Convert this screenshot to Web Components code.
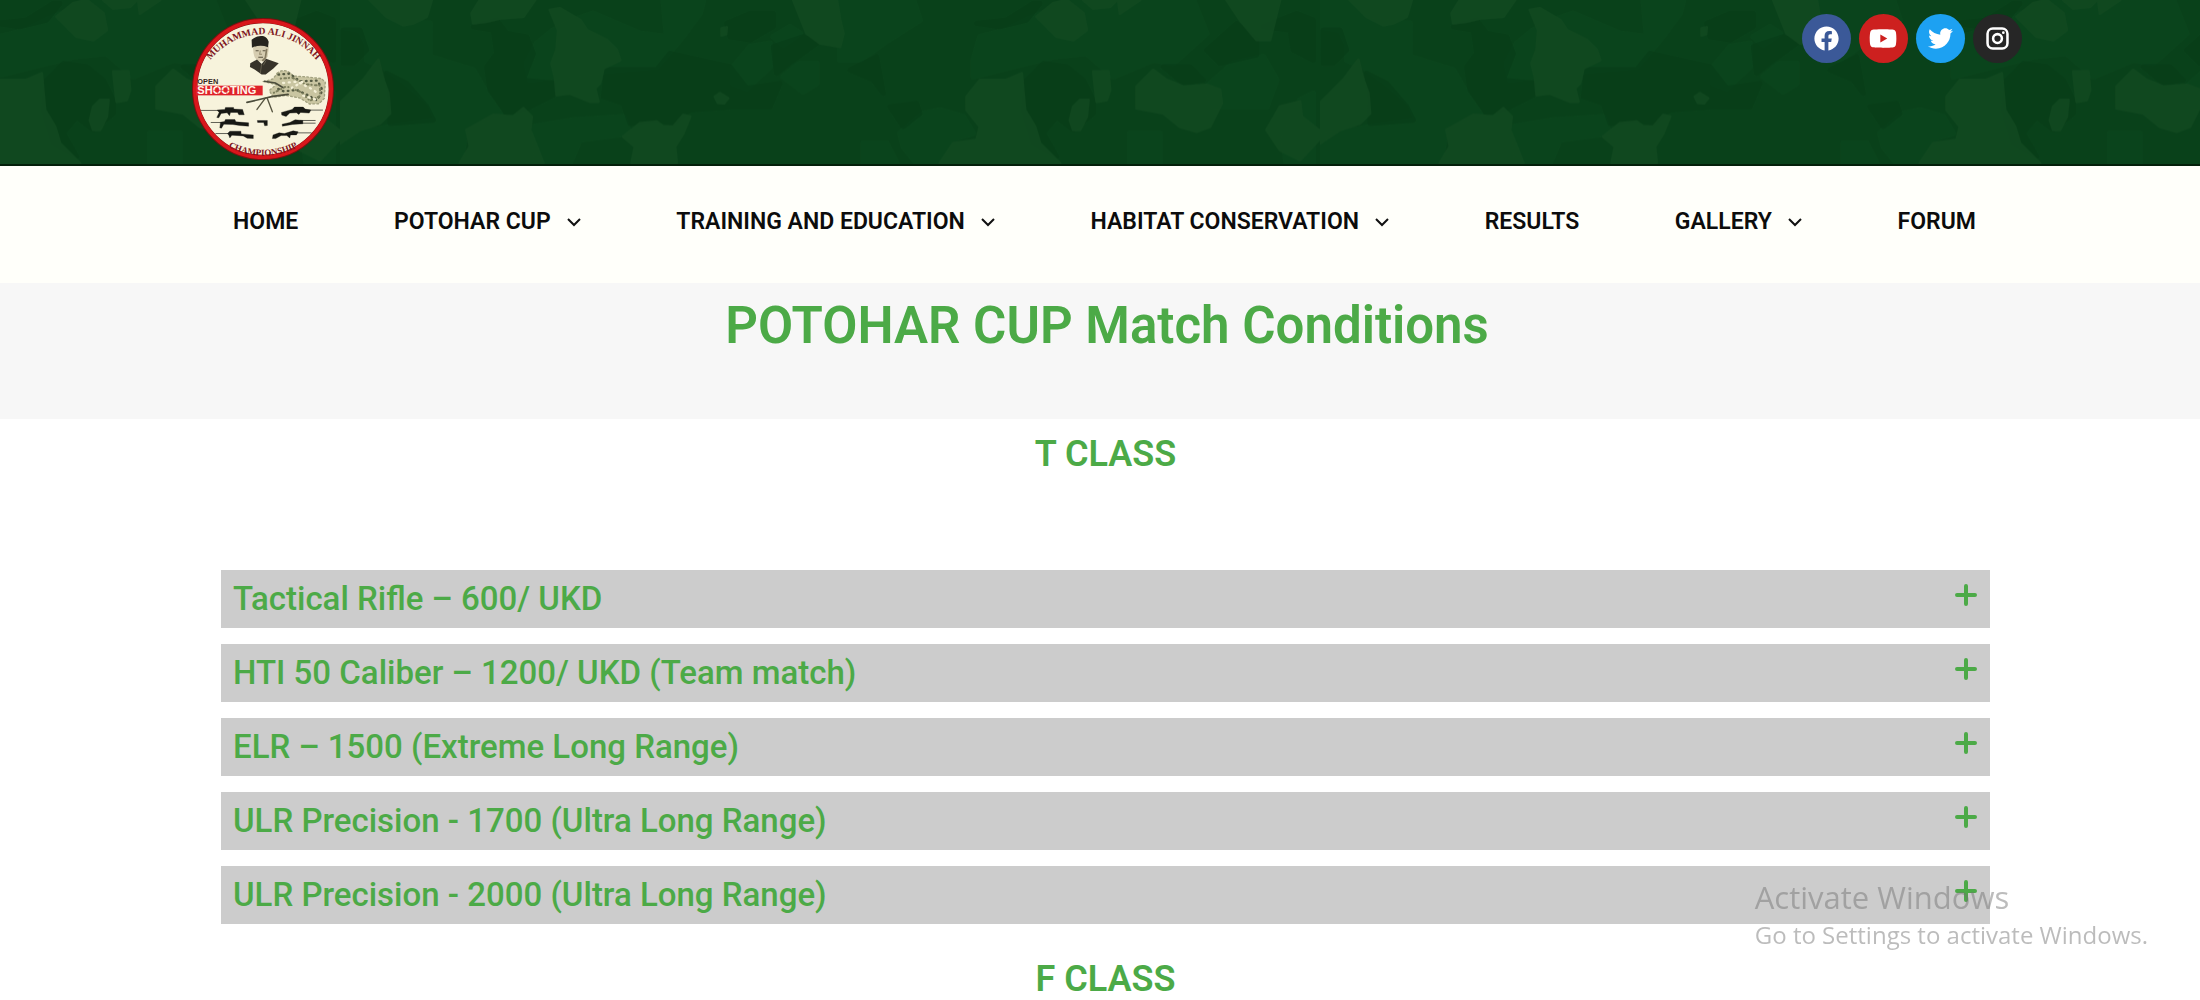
<!DOCTYPE html>
<html lang="en">
<head>
    <meta charset="UTF-8">
    <meta name="viewport" content="width=device-width, initial-scale=1.0">
    <title>POTOHAR CUP Match Conditions</title>
    <style>
        body {
            margin: 0;
            background-color: #fff;
            font-family: Roboto, "Liberation Sans", sans-serif;
            --green: #4caa47;
            --edge-left: 192px;
            --edge-right: 178px;
        }
    </style>
</head>
<body>

    <site-header></site-header>

    <site-nav>
        <nav-item href="#home">HOME</nav-item>
        <nav-item href="#cup" menu>POTOHAR CUP</nav-item>
        <nav-item href="#training" menu>TRAINING AND EDUCATION</nav-item>
        <nav-item href="#habitat" menu>HABITAT CONSERVATION</nav-item>
        <nav-item href="#results">RESULTS</nav-item>
        <nav-item href="#gallery" menu>GALLERY</nav-item>
        <nav-item href="#forum">FORUM</nav-item>
    </site-nav>

    <page-title>POTOHAR CUP Match Conditions</page-title>

    <match-class name="T CLASS">
        <match-item>Tactical Rifle – 600/ UKD</match-item>
        <match-item>HTI 50 Caliber – 1200/ UKD (Team match)</match-item>
        <match-item>ELR – 1500 (Extreme Long Range)</match-item>
        <match-item>ULR Precision - 1700 (Ultra Long Range)</match-item>
        <match-item>ULR Precision - 2000 (Ultra Long Range)</match-item>
    </match-class>

    <match-class name="F CLASS"></match-class>

    <activate-notice></activate-notice>

    <script>
        // Camouflage strip, one 980px tile repeated across the header
        class CamoBackground extends HTMLElement {
            constructor() {
                super();
                this.attachShadow({ mode: 'open' });
                this.shadowRoot.innerHTML = `
                    <style>
                        :host { display: block; overflow: hidden; }
                        svg { display: block; width: 100%; height: 100%; }
                        g { stroke-width: 16; stroke-linejoin: round; }
                        .mid { fill: #0a451c; stroke: #0a451c; opacity: 0.8; }
                        .dark { fill: #063c16; stroke: #063c16; opacity: 0.6; }
                        .light { fill: #11481f; stroke: #11481f; opacity: 0.85; stroke-width: 8; }
                    </style>
                    <svg aria-hidden="true">
                        <defs>
                            <pattern id="camo" width="2940" height="520" patternUnits="userSpaceOnUse" patternTransform="scale(.33333) translate(1020 0)">
                                <rect width="2940" height="520" fill="#09411a"/>
                                <g class="mid">
                                    <path d="M0 0H100L130 60 270 70V170L400 210 440 280 480 340 380 380 360 500H0V410L150 380 290 360 270 310 200 250 130 200 80 180V130L60 90 0 80Z"/>
                                    <path d="M560 190 590 130 640 90 700 60 760 40 900 100 980 110 970 0 1090 0 1080 40 1020 120 950 200 830 210 640 230 570 240Z"/>
                                    <path d="M1180 200 1230 140 1290 130 1290 200 1220 265 1180 250ZM1330 230 1380 190 1430 190 1430 250 1390 275ZM1300 110 1350 80 1380 100 1330 135Z"/>
                                    <path d="M1500 0H1720L1740 60 1630 130 1560 180 1500 180ZM580 380 700 360 850 350 870 400 720 420 690 490H590Z"/>
                                    <path d="M1900 180 1920 110 2000 90 2060 60 2200 0 2560 0 2600 100 2500 190 2440 180 2320 230 2240 160 2140 170 1900 230Z"/>
                                    <path d="M1680 400 1750 340 1800 330 1870 350 1900 400 1830 420 1800 490H1730L1690 440ZM1570 430 1640 430 1670 490 1570 490Z"/>
                                    <path d="M2600 260 2680 190 2770 170 2810 240 2780 320 2620 320ZM2370 400 2460 400 2460 490H2370ZM2880 300 2920 280V500H2840L2830 420Z"/>
                                </g>
                                <g class="dark">
                                    <path d="M10 90 60 90 80 150 40 190 10 190ZM140 220 200 250 260 320 280 360 150 370 150 280ZM400 80 470 60 500 100 560 110 580 160 550 240 640 250 640 285 560 325 500 340 450 270 440 200 470 160 460 90Z"/>
                                    <path d="M800 210 950 210 990 160 1170 200 1220 265 1320 250 1290 320 1180 320 1050 330 1000 370 950 360 870 370 850 310 790 290ZM1170 110 1160 70 1230 40 1300 40 1300 80 1230 120ZM1300 140 1390 110 1430 130 1360 180 1310 220Z"/>
                                    <path d="M1910 70 2000 60 2080 10 2100 10 2060 60 1980 80ZM1530 210 1610 170 1630 280 1600 240ZM1650 320 1730 310 1740 340 1690 380ZM2600 150 2690 70 2750 120 2750 165 2640 190ZM2470 200 2550 200 2590 240 2530 250ZM2770 80 2870 40 2920 60V180L2860 150 2850 90Z"/>
                                    <path d="M2060 240 2110 190 2180 200 2230 240 2260 300 2260 340 2200 390 2150 350 2110 400 2150 470 2080 430 2050 330Z"/>
                                </g>
                                <g class="light">
                                    <path d="M90 0H275L260 50 220 70 190 75 140 50ZM400 70 395 40 420 0H585L550 50 480 55 440 65ZM0 310 70 240 100 200 115 180 130 240 145 280 150 340 120 370 60 390 30 410 0 430Z"/>
                                    <path d="M630 30 660 25 720 60 740 90 800 120 830 150 840 180 790 205 780 250 765 265 775 305 750 305 690 280 650 285 645 230 635 190 650 150 655 90Z"/>
                                    <path d="M380 390 460 345 520 350 550 325 575 350 570 390 590 440 610 490H360L390 440ZM850 410 900 370 950 365 970 380 1000 380 1030 345 1050 350 1030 400 1005 440 1010 490H875L885 440Z"/>
                                    <path d="M1360 0H1490L1500 60 1510 100 1500 140 1440 130 1400 100 1380 50ZM1145 85 1160 82 1158 102 1145 106ZM1125 290 1140 280 1164 295 1152 310 1134 308Z"/>
                                    <path d="M1880 290 1920 240 2000 240 2045 220 2055 330 2085 380 2100 430 2160 490H1800L1840 430 1910 420 1920 380 1880 330ZM2390 260 2440 210 2480 240 2530 260 2600 255 2640 270 2645 310 2610 380 2570 395 2520 380 2470 340 2390 325Z"/>
                                    <path d="M2090 50 2140 10 2180 0 2230 40 2240 90 2200 120 2150 110ZM2230 0H2330L2310 20 2260 25ZM2335 0H2400L2340 40ZM2660 0H2820L2800 80 2790 120 2750 120 2700 60ZM2260 215H2305L2310 270 2300 300 2270 305ZM2200 320 2220 300H2245L2240 350 2220 390H2200L2190 360Z"/>
                                    <path d="M2780 390 2820 320 2880 305 2885 350 2936 390V420L2880 480 2820 450Z"/>
                                </g>
                            </pattern>
                        </defs>
                        <rect width="100%" height="100%" fill="url(#camo)"/>
                    </svg>
                `;
            }
        }

        class SiteLogo extends HTMLElement {
            constructor() {
                super();
                this.attachShadow({ mode: 'open' });
                this.shadowRoot.innerHTML = `
                    <style>
                        :host { display: block; }
                        a, svg { display: block; }
                    </style>
                    <a href="#home" aria-label="Home">
                        <svg width="142" height="142" viewBox="68 53 424 424">
                            <defs>
                                <path id="top" d="M110 197A201 201 0 0 1 452 197"/>
                                <path id="bottom" d="M160 428A217 217 0 0 0 400 428"/>
                            </defs>
                            <circle cx="280" cy="265" r="204" fill="#f7f3dc" stroke="#7c1010" stroke-width="16"/>
                            <circle cx="280" cy="265" r="203" fill="none" stroke="#d8161b" stroke-width="12"/>
                            <g font-family="Liberation Serif, serif" font-weight="700" fill="#7d1420">
                                <text font-size="29" text-anchor="middle"><textPath href="#top" startOffset="50%">MUHAMMAD ALI JINNAH</textPath></text>
                                <text font-size="27" text-anchor="middle"><textPath href="#bottom" startOffset="50%">CHAMPIONSHIP</textPath></text>
                            </g>
                            <!-- portrait -->
                            <path d="M250 132Q250 160 256 172L266 182H284L294 168 298 138Z" fill="#d5ccb0"/>
                            <path d="M247 142 246 118Q262 104 280 107 293 111 297 124L295 140Q270 131 247 142Z" fill="#25231d"/>
                            <path d="M258 151h9M279 151h9M266 170h14" stroke="#59513f" stroke-width="3"/>
                            <path d="M272 150l-2 11h7" fill="none" stroke="#93896c" stroke-width="3"/>
                            <path d="M291 145 287 172 278 181" fill="none" stroke="#857b60" stroke-width="5"/>
                            <path d="M242 188 262 177 276 190 289 175 327 188 311 204 288 222H276L255 207 241 199Z" fill="#37332a"/>
                            <path d="M276 190 272 218M289 180 281 194" stroke="#77705b" stroke-width="2"/>
                            <!-- shooter in ghillie suit -->
                            <g fill="none" stroke-linecap="round">
                                <path d="M322 218Q340 203 362 217L370 226 412 229 455 234 466 245 463 293 447 309 419 310 391 292 348 284 310 290 299 269 320 252 284 243 310 235Z" fill="#c9c5a1" stroke="#a3a280" stroke-width="4" stroke-dasharray="5 7"/>
                                <path d="M326 222 360 219 390 242 443 240 458 269 441 299 413 283 381 268 342 272 317 261" stroke="#555b43" stroke-width="7" stroke-dasharray="2 13"/>
                                <path d="M333 234 367 231 408 251 450 255 451 286 420 300 395 275 350 257 309 278" stroke="#7d7f5d" stroke-width="6" stroke-dasharray="1 10 5 8"/>
                                <path d="M340 247 382 243 424 264 440 275M365 262 409 237M400 285 436 296" stroke="#f4f0d7" stroke-width="7" stroke-dasharray="3 14"/>
                                <path d="M284 242 317 247 338 260M232 305 309 287 355 281" stroke="#4b4c3b" stroke-width="5"/>
                                <path d="M287 292 262 326M292 291 308 333" stroke="#55533f" stroke-width="4"/>
                            </g>
                            <rect x="80" y="255" width="199" height="29" fill="#df222a"/>
                            <g font-family="Liberation Sans, sans-serif" font-weight="700">
                                <text x="84" y="250" font-size="22" fill="#332621">OPEN</text>
                                <text x="84" y="281" font-size="33" fill="#fff8ea">SHOOTING</text>
                            </g>
                            <path d="M132 269h56M145 257v25M172 257v25" fill="none" stroke="#df222a" stroke-width="2"/>
                            <!-- rifles -->
                            <g fill="#171814" stroke="#171814">
                                <path d="M95 329H160M124 365H176M138 398H188M395 328H459M390 359H437M390 367H437M370 396H425" stroke-width="2"/>
                                <path d="M143 328 166 326 168 320H192L193 325 219 326 224 342 208 342 204 335 183 335 180 345 173 336 155 338 148 351 142 350 149 335Z"/>
                                <path d="M153 364 165 362 168 356H196L199 363 237 366V376L210 374 190 371 163 370 156 382 151 381Z"/>
                                <path d="M174 398 181 391H214L215 399 251 402V413L233 412 221 405 187 403 181 411 178 403Z"/>
                                <path d="M335 335 356 329 367 326 374 319H400L406 325 423 328 418 337 392 335 387 341 380 336 360 337 349 347 336 343Z"/>
                                <path d="M337 370 360 365 376 357 399 359V369L368 371 338 376Z"/>
                                <path d="M310 402 328 396 344 398 370 390 385 393 380 402 362 402 360 411 351 404 334 404 318 413 308 413Z"/>
                                <path d="M263 359H293V374L285 375 282 365 264 365Z"/>
                            </g>
                        </svg>
                    </a>
                `;
            }
        }

        const SOCIAL_ICONS = {
            Facebook: {
                color: '#3b5998',
                box: '0 0 512 512',
                shape: '<path d="M504 256C504 119 393 8 256 8S8 119 8 256c0 123.78 90.69 226.38 209.25 245V327.69h-63V256h63v-54.64c0-62.15 37-96.48 93.67-96.48 27.14 0 55.52 4.84 55.52 4.84v61h-31.28c-30.8 0-40.41 19.12-40.41 38.73V256h68.78l-11 71.69h-57.78V501C413.31 482.38 504 379.78 504 256z"/>'
            },
            YouTube: {
                color: '#cd201f',
                box: '0 0 576 512',
                shape: '<path d="M549.655 124.083c-6.281-23.65-24.787-42.276-48.284-48.597C458.781 64 288 64 288 64S117.22 64 74.629 75.486c-23.497 6.322-42.003 24.947-48.284 48.597-11.412 42.867-11.412 132.305-11.412 132.305s0 89.438 11.412 132.305c6.281 23.65 24.787 41.5 48.284 47.821C117.22 448 288 448 288 448s170.78 0 213.371-11.486c23.497-6.321 42.003-24.171 48.284-47.821 11.412-42.867 11.412-132.305 11.412-132.305s0-89.438-11.412-132.305zm-317.51 213.508V175.185l142.739 81.205-142.739 81.201z"/>'
            },
            Twitter: {
                color: '#1da1f2',
                box: '0 0 512 512',
                shape: '<path d="M459.37 151.716c.325 4.548.325 9.097.325 13.645 0 138.72-105.583 298.558-298.558 298.558-59.452 0-114.68-17.219-161.137-47.106 8.447.974 16.568 1.299 25.34 1.299 49.055 0 94.213-16.568 130.274-44.832-46.132-.975-84.792-31.188-98.112-72.772 6.498.974 12.995 1.624 19.818 1.624 9.421 0 18.843-1.3 27.614-3.573-48.081-9.747-84.143-51.98-84.143-102.985v-1.299c13.969 7.797 30.214 12.67 47.431 13.319-28.264-18.843-46.781-51.005-46.781-87.391 0-19.492 5.197-37.36 14.294-52.954 51.655 63.675 129.3 105.258 216.365 109.807-1.624-7.797-2.599-15.918-2.599-24.04 0-57.828 46.782-104.934 104.934-104.934 30.213 0 57.502 12.67 76.67 33.137 23.715-4.548 46.456-13.32 66.599-25.34-7.798 24.366-24.366 44.833-46.132 57.827 21.117-2.273 41.584-8.122 60.426-16.243-14.292 20.791-32.161 39.308-52.628 54.253z"/>'
            },
            Instagram: {
                color: '#262626',
                box: '0 0 512 512',
                shape: '<rect x="52" y="52" width="408" height="408" rx="108" fill="none" stroke="#fff" stroke-width="52"/><circle cx="256" cy="256" r="90" fill="none" stroke="#fff" stroke-width="52"/><circle cx="376" cy="136" r="28"/>'
            }
        };

        class SocialLink extends HTMLElement {
            constructor() {
                super();
                this.attachShadow({ mode: 'open' });
            }

            connectedCallback() {
                const network = this.getAttribute('network');
                const icon = SOCIAL_ICONS[network];
                this.shadowRoot.innerHTML = `
                    <style>
                        :host { display: block; }
                        a {
                            display: flex;
                            align-items: center;
                            justify-content: center;
                            width: 49px;
                            height: 49px;
                            border-radius: 50%;
                            background-color: ${icon.color};
                        }
                        svg { height: 25px; fill: #fff; }
                    </style>
                    <a href="#${network.toLowerCase()}" aria-label="${network}">
                        <svg viewBox="${icon.box}">${icon.shape}</svg>
                    </a>
                `;
            }
        }

        class SiteHeader extends HTMLElement {
            constructor() {
                super();
                this.attachShadow({ mode: 'open' });
                this.shadowRoot.innerHTML = `
                    <style>
                        :host {
                            display: grid;
                            border-bottom: 2px solid #03200a;
                        }
                        camo-background, header { grid-area: 1 / 1; }
                        camo-background { height: 0; min-height: 100%; }
                        header {
                            display: flex;
                            justify-content: space-between;
                            align-items: flex-start;
                            padding: 14px var(--edge-right) 4px var(--edge-left);
                            z-index: 1;
                        }
                        site-logo { padding-top: 4px; }
                        .social { display: flex; gap: 8px; }
                    </style>
                    <camo-background></camo-background>
                    <header>
                        <site-logo></site-logo>
                        <div class="social">
                            <social-link network="Facebook"></social-link>
                            <social-link network="YouTube"></social-link>
                            <social-link network="Twitter"></social-link>
                            <social-link network="Instagram"></social-link>
                        </div>
                    </header>
                `;
            }
        }

        class SiteNav extends HTMLElement {
            constructor() {
                super();
                this.attachShadow({ mode: 'open' });
                this.shadowRoot.innerHTML = `
                    <style>
                        :host { display: block; background-color: #fffffa; }
                        nav {
                            display: flex;
                            justify-content: space-between;
                            padding: 40px 224px 45px 233px;
                        }
                    </style>
                    <nav><slot></slot></nav>
                `;
            }
        }

        class NavItem extends HTMLElement {
            constructor() {
                super();
                this.attachShadow({ mode: 'open' });
            }

            connectedCallback() {
                const arrow = this.hasAttribute('menu')
                    ? '<svg width="14" height="10" viewBox="0 0 14 10" aria-hidden="true"><path d="M1 2l6 6 6-6" fill="none" stroke="#111" stroke-width="2"/></svg>'
                    : '';
                this.shadowRoot.innerHTML = `
                    <style>
                        :host { display: block; }
                        a {
                            display: flex;
                            align-items: center;
                            gap: 16px;
                            color: #0c0c0c;
                            font-size: 23px;
                            font-weight: 600;
                            line-height: 32px;
                            text-decoration: none;
                            white-space: nowrap;
                        }
                    </style>
                    <a href="${this.getAttribute('href')}"><slot></slot>${arrow}</a>
                `;
            }
        }

        class PageTitle extends HTMLElement {
            constructor() {
                super();
                this.attachShadow({ mode: 'open' });
                this.shadowRoot.innerHTML = `
                    <style>
                        :host {
                            display: block;
                            background-color: #f7f7f7;
                            padding: 17px var(--edge-right) 67px var(--edge-left);
                        }
                        h1 {
                            margin: 0;
                            color: var(--green);
                            font-size: 51px;
                            font-weight: 600;
                            line-height: 52px;
                            text-align: center;
                        }
                    </style>
                    <h1><slot></slot></h1>
                `;
            }
        }

        class MatchClass extends HTMLElement {
            constructor() {
                super();
                this.attachShadow({ mode: 'open' });
            }

            connectedCallback() {
                this.shadowRoot.innerHTML = `
                    <style>
                        :host {
                            display: block;
                            padding: 16px calc(var(--edge-right) + 32px) 0 calc(var(--edge-left) + 29px);
                        }
                        h2 {
                            margin: 0;
                            color: var(--green);
                            font-size: 36px;
                            font-weight: 600;
                            line-height: 38px;
                            text-align: center;
                        }
                        .items {
                            display: flex;
                            flex-direction: column;
                            gap: 16px;
                            padding-top: 97px;
                            padding-bottom: 20px;
                        }
                    </style>
                    <h2>${this.getAttribute('name')}</h2>
                    ${this.children.length ? '<div class="items"><slot></slot></div>' : ''}
                `;
            }
        }

        class MatchItem extends HTMLElement {
            constructor() {
                super();
                this.attachShadow({ mode: 'open' });
                this.shadowRoot.innerHTML = `
                    <style>
                        :host { display: block; }
                        button {
                            display: flex;
                            justify-content: space-between;
                            align-items: flex-start;
                            width: 100%;
                            padding: 13px 13px 13px 12px;
                            border: 0;
                            background-color: #ccc;
                            color: var(--green);
                            font-family: inherit;
                            font-size: 33px;
                            font-weight: 500;
                            line-height: 32px;
                            text-align: left;
                        }
                        svg { display: block; margin-top: 1px; }
                    </style>
                    <button type="button" aria-expanded="false">
                        <span><slot></slot></span>
                        <svg width="22" height="22" viewBox="0 0 22 22" aria-hidden="true">
                            <path d="M11 2V20M2 11H20" stroke="currentColor" stroke-width="4" stroke-linecap="round"/>
                        </svg>
                    </button>
                `;
            }
        }

        // Notice floating over the lower right corner of the window
        class ActivateNotice extends HTMLElement {
            constructor() {
                super();
                this.attachShadow({ mode: 'open' });
                this.shadowRoot.innerHTML = `
                    <style>
                        :host {
                            position: fixed;
                            right: 52px;
                            bottom: 48px;
                            color: rgba(115, 115, 115, 0.48);
                            font-family: "Open Sans", "Noto Sans", sans-serif;
                            pointer-events: none;
                        }
                        p { margin: 0; white-space: nowrap; }
                        .title { font-size: 31px; line-height: 42px; }
                        .hint { font-size: 24px; line-height: 34px; }
                    </style>
                    <p class="title">Activate Windows</p>
                    <p class="hint">Go to Settings to activate Windows.</p>
                `;
            }
        }

        customElements.define('camo-background', CamoBackground);
        customElements.define('site-logo', SiteLogo);
        customElements.define('social-link', SocialLink);
        customElements.define('site-header', SiteHeader);
        customElements.define('site-nav', SiteNav);
        customElements.define('nav-item', NavItem);
        customElements.define('page-title', PageTitle);
        customElements.define('match-class', MatchClass);
        customElements.define('match-item', MatchItem);
        customElements.define('activate-notice', ActivateNotice);
    </script>
</body>
</html>
